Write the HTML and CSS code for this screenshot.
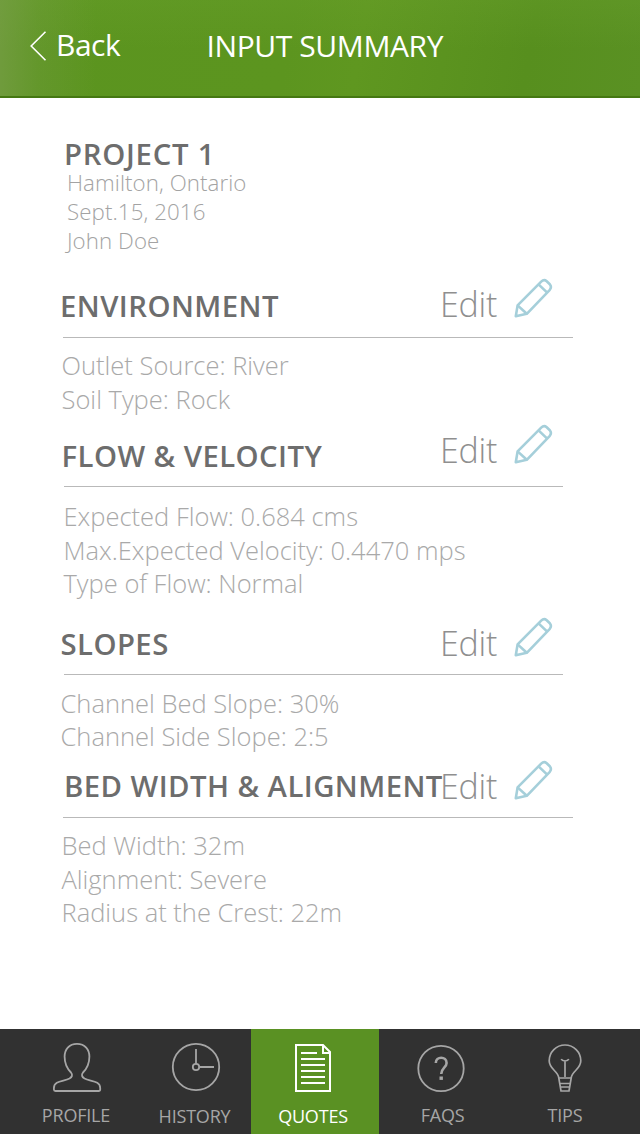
FILE: index.html
```html
<!DOCTYPE html>
<html lang="en">
<head>
<meta charset="utf-8">
<title>Input Summary</title>
<link rel="stylesheet" href="styles.css">
</head>
<body>
<svg width="0" height="0" class="defs">
  <symbol id="pencil" viewBox="0 0 40 40">
    <g fill="none" stroke="#a5cfda" stroke-width="2.6" stroke-linejoin="round">
      <path d="M1.8 38.2 L3.600 27.400 L27.2 3.600 Q30 1 32.700 3.200 L35.800 6.200 Q38 9 35.800 11.800 L12.800 35.800 Z"/>
      <path d="M3.600 27.400 L12.800 35.800 M24.800 6.600 L33.200 14.600"/>
    </g>
  </symbol>
</svg>
<header class="topbar">
  <a class="back">
    <svg class="chevron" width="17" height="30" viewBox="0 0 17 30"><path d="M15.500 .8 L1.200 15 L15.500 29.2" fill="none" stroke="#fff" stroke-width="1.6"/></svg>
    <span class="back-label">Back</span>
  </a>
  <h1 class="title">INPUT SUMMARY</h1>
</header>
<main class="content">
  <section class="project">
    <h2 class="heading heading-project">PROJECT 1</h2>
    <p class="meta">Hamilton, Ontario</p>
    <p class="meta">Sept.15, 2016</p>
    <p class="meta">John Doe</p>
  </section>
  <section class="section environment">
    <div class="section-head">
      <h2 class="heading">ENVIRONMENT</h2>
      <a class="edit"><span class="edit-label">Edit</span><svg class="pencil"><use href="#pencil"/></svg></a>
    </div>
    <div class="details"><p>Outlet Source: River</p><p>Soil Type: Rock</p></div>
  </section>
  <section class="section flow">
    <div class="section-head">
      <h2 class="heading">FLOW &amp; VELOCITY</h2>
      <a class="edit"><span class="edit-label">Edit</span><svg class="pencil"><use href="#pencil"/></svg></a>
    </div>
    <div class="details"><p>Expected Flow: 0.684 cms</p><p>Max.Expected Velocity: 0.4470 mps</p><p>Type of Flow: Normal</p></div>
  </section>
  <section class="section slopes">
    <div class="section-head">
      <h2 class="heading">SLOPES</h2>
      <a class="edit"><span class="edit-label">Edit</span><svg class="pencil"><use href="#pencil"/></svg></a>
    </div>
    <div class="details"><p>Channel Bed Slope: 30%</p><p>Channel Side Slope: 2:5</p></div>
  </section>
  <section class="section bed">
    <div class="section-head">
      <h2 class="heading">BED WIDTH &amp; ALIGNMENT</h2>
      <a class="edit"><span class="edit-label">Edit</span><svg class="pencil"><use href="#pencil"/></svg></a>
    </div>
    <div class="details"><p>Bed Width: 32m</p><p>Alignment: Severe</p><p>Radius at the Crest: 22m</p></div>
  </section>
</main>
<nav class="tabs">
  <a class="tab profile">
    <svg width="52" height="52" viewBox="0 0 52 52"><path d="M26 2.8 C18 2.8 13.600 8.500 13.600 15.500 C13.600 22 16 27.500 20 31.500 C22 34 21 36 18.500 37.500 C13 40.500 2.900 39.500 2.900 47 V48.500 Q2.900 50 4.500 50 H47.500 Q49.200 50 49.200 48.500 V47 C49.200 39.500 39 40.500 33.500 37.500 C31 36 30 34 32 31.500 C36 27.500 38.400 22 38.400 15.500 C38.400 8.500 34 2.800 26 2.800 Z" fill="none" stroke="#a6a6a6" stroke-width="1.8"/></svg>
    <span class="tab-label">PROFILE</span>
  </a>
  <a class="tab history">
    <svg width="52" height="52" viewBox="0 0 52 52"><g fill="none" stroke="#a6a6a6" stroke-width="1.8"><circle cx="26" cy="26" r="23.200"/><circle cx="26" cy="26" r="3.200"/><path d="M26 8 V22.800 M29.200 26 H44"/></g></svg>
    <span class="tab-label">HISTORY</span>
  </a>
  <a class="tab quotes">
    <svg width="52" height="52" viewBox="0 0 52 52"><g fill="none" stroke="#fff" stroke-width="2"><path d="M9 4 H36 L43 11 V50 H9 Z M36 4 V12 H43"/><path d="M14 12 H30 M14 18 H38 M14 24 H38 M14 30 H38 M14 36 H38 M14 42 H38"/></g></svg>
    <span class="tab-label">QUOTES</span>
  </a>
  <a class="tab faqs">
    <svg width="52" height="52" viewBox="0 0 52 52"><circle cx="26" cy="27.500" r="22.700" fill="none" stroke="#a6a6a6" stroke-width="1.800"/><path d="M20.800 22 C20.800 15 31.600 15 31.600 22 C31.600 26.500 26.200 27 26.200 33" fill="none" stroke="#a6a6a6" stroke-width="2.600"/><rect x="24.500" y="35.500" width="3.400" height="3.400" fill="#a6a6a6"/></svg>
    <span class="tab-label">FAQS</span>
  </a>
  <a class="tab tips">
    <svg width="52" height="52" viewBox="0 0 52 52"><g fill="none" stroke="#a6a6a6" stroke-width="1.700"><path d="M19.800 37 C19.400 30 10.200 28.500 10.200 19.800 A15.800 15.800 0 0 1 41.800 19.800 C41.800 28.500 32.600 30 32.200 37 Z"/><path d="M19.800 37 L22 50 H30 L32.200 37 M20.800 42.500 H31.200 M21.300 46 H30.700 M26 36 V20 M22.200 18 Q23 19.800 26 20 Q29 19.800 29.800 18"/></g></svg>
    <span class="tab-label">TIPS</span>
  </a>
</nav>
</body>
</html>
```
FILE: styles.css
```css
* { box-sizing: border-box; }
body { margin: 0; width: 640px; height: 1134px; display: flex; flex-direction: column; background: #fff; font-family: "Open Sans", "Noto Sans", sans-serif; overflow: hidden; }
h1, h2, p { margin: 0; font-weight: inherit; white-space: nowrap; }
.defs { position: absolute; }
.topbar { height: 98px; flex: none; display: flex; align-items: flex-start; color: #fff; border-bottom: 2px solid #457812;
  background: linear-gradient(90deg, rgba(125,160,80,.6), rgba(125,160,80,.25) 6%, rgba(125,160,80,0) 15%), linear-gradient(180deg, rgba(110,165,50,.25), rgba(110,165,50,0) 50%), linear-gradient(100deg, #5b941f 0%, #5c951f 45%, #5f9720 56%, #578f1e 82%, #5a9123 100%); }
.back { display: flex; padding: 25px 0 0 30px; width: 206px; }
.chevron { margin-top: 6px; }
.back-label { font-size: 30px; line-height: 40px; margin-left: 9px; letter-spacing: -0.5px; }
.title { font-size: 30px; line-height: 40px; padding: 26px 0 0 0.500px; letter-spacing: -0.4px; }
.content { flex: 1; }
.project { height: 180px; padding: 36px 0 0 64px; }
.heading { font-size: 29.300px; line-height: 40px; font-weight: 600; letter-spacing: 0.440px; color: #6d6d6d; }
.meta { font-size: 22.300px; line-height: 29px; font-weight: 300; letter-spacing: 0.080px; color: #a3a3a3; margin-left: 3px; }
.heading-project { margin-bottom: -6px; letter-spacing: 0.750px; }
.section { padding-left: 63px; }
.section-head { display: flex; position: relative; border-bottom: 1px solid #b9b9b9; width: 510px; height: 60px; }
.edit { position: absolute; left: 377px; top: 0; display: flex; color: #8f8f8f; font-weight: 300; }
.edit-label { font-size: 34px; line-height: 40px; padding-top: 6px; width: 74px; letter-spacing: -0.2px; }
.pencil { width: 40px; height: 40px; flex: none; }
.details { font-size: 25.500px; line-height: 33.500px; font-weight: 300; color: #a9a9a9; }
.environment { height: 146px; }
.environment .heading { margin: 8px 0 0 -3px; }
.environment .details { padding-top: 11px; margin-left: -1.500px; }
.flow { height: 193px; padding-left: 64px; }
.flow .section-head { height: 63px; width: 499px; }
.flow .heading { margin: 12px 0 0 -2.500px; }
.flow .details { padding-top: 13px; margin-left: -0.500px; }
.slopes { height: 143px; padding-left: 64px; }
.slopes .section-head { height: 58px; width: 499px; }
.slopes .heading { margin: 7px 0 0 -3.500px; }
.slopes .details { padding-top: 11.500px; margin-left: -3.500px; }
.flow .edit, .slopes .edit { left: 376px; }
.bed .section-head { height: 58px; }
.bed .heading { margin: 6px 0 0 1px; }
.bed .details { padding-top: 11px; margin-left: -1.500px; }
.tabs { height: 105px; flex: none; display: flex; background: #313131; color: #a6a6a6; }
.tab { display: flex; flex-direction: column; align-items: center; padding-top: 12px; }
.tab-label { font-size: 18px; line-height: 24px; margin-top: 10px; letter-spacing: -0.2px; }
.profile { width: 154px; }
.profile .tab-label { margin-right: 2px; }
.history { width: 97px; padding-right: 13px; }
.history .tab-label { margin: 11px 3px 0 0; }
.quotes { width: 128px; padding-right: 4px; background: #5a9123; color: #fff; }
.quotes .tab-label { margin-top: 11px; }
.faqs { width: 124px; padding-right: 1px; }
.faqs .tab-label { margin-left: 4px; }
.tips { width: 125px; padding-right: 1px; }
```
